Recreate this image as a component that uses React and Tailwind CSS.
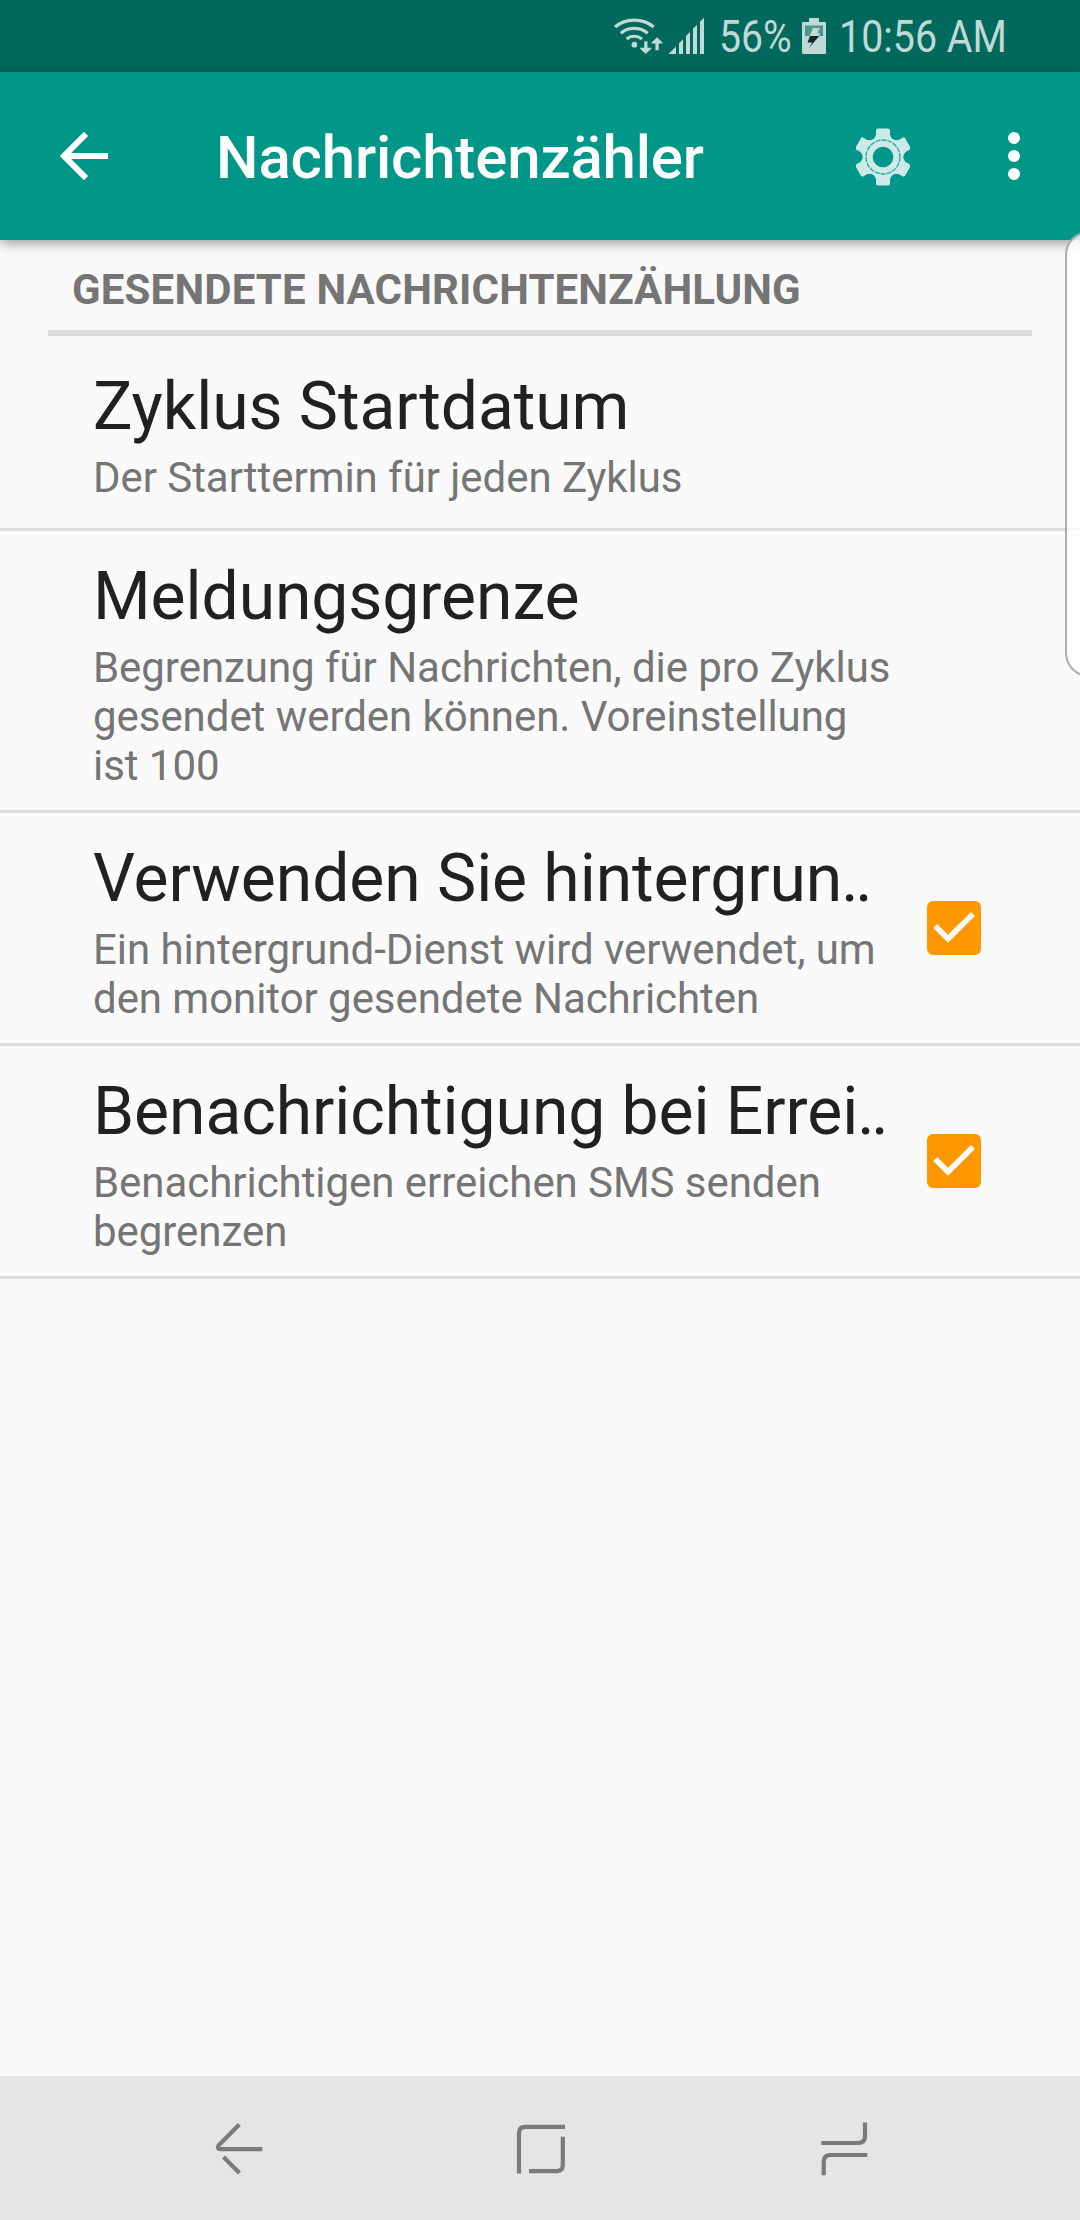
const INK = "#bfd9d6";

function StatusIcons() {
  return (
    <svg width="92" height="40" viewBox="613 15 92 40" fill="none">
      <g stroke={INK} strokeWidth="3.2">
        <path d="M615 26C625.500 16.800 643 16.800 653.700 26" />
        <path d="M620.800 32.200C628.200 25.800 640 25.800 647.800 32.200" />
        <path d="M626.700 38C631 34.300 637.300 34.300 642 38" />
      </g>
      <circle cx="634.400" cy="43.700" r="2.900" fill={INK} />
      <path fill={INK} d="M644.200 40.300h3.300v6.500h3.800v1l-5.600 5.200-5.600-5.200v-1h4.100zM655.400 49.300h3.300v-6.800h3.800v-1l-5.400-5.200-5.600 5.200v1h3.900z" />
      <path fill={INK} d="M668.500 53l7.500-7.500V53zM679 53V42.300l4-4V53zM686 53V35l4-4v22zM693 53V27.800l4-4V53zM700 53V20.800l4-4V53z" />
    </svg>
  );
}

function BatteryIcon() {
  return (
    <svg width="24" height="36" viewBox="802 18 24 36">
      <path fill={INK} d="M810 18h8q1 0 1 1v3h6q1 0 1 1v30q0 1-1 1h-22q-1 0-1-1V23q0-1 1-1h6v-3q0-1 1-1z" />
      <path fill="#4d968d" d="M805 25.500h18V36h-18z" />
      <path fill={INK} d="M813 28h7l-2.500 5h2.500l-1 3h-9.500z" />
      <path fill="#14282a" d="M810 36h9.300L808.700 48.200l3.500-5.700h-4.700z" />
    </svg>
  );
}

function GearIcon() {
  return (
    <svg width="54" height="60" viewBox="-27 -30 54 60">
      <g fill="#cceae7">
        {[0, 60, 120, 180, 240, 300].map((angle) => (
          <path key={angle} transform={`rotate(${angle})`} d="M-9.500-17L-7-22V-26.500q0-2 2-2H5q2 0 2 2V-22L9.500-17z" />
        ))}
        <circle r="20.500" />
      </g>
      <circle r="17" fill="none" stroke="#009688" strokeWidth="1.300" strokeDasharray="5 1" opacity=".8" />
      <circle r="10.300" fill="#009688" />
    </svg>
  );
}

function Checkbox() {
  return (
    <svg className="shrink-0 self-center" width="54" height="54" viewBox="0 0 54 54">
      <rect width="54" height="54" rx="6" fill="#ff9800" />
      <path d="M8.200 25L21 37.800 46 13" fill="none" stroke="#fafafa" strokeWidth="5.600" />
    </svg>
  );
}

function Row({ title, clipped, lines, checked }) {
  return (
    <div className="flex border-b-3 border-[#dcdcdc]">
      <div className="flex min-h-48 flex-1 items-start pr-[99px] pl-[93px]">
        <div className={lines.length === 1 ? "flex-1 pt-8 whitespace-nowrap" : "flex-1 pt-[27px] pb-5 whitespace-nowrap"}>
          <h2 className="text-[66px] leading-[77px] tracking-[-0.06px] text-[#212121]">
            {title}
            {clipped && <span className="-ml-px tracking-[-3.4px]">..</span>}
          </h2>
          <div className="mt-2 text-[42px] leading-[49px] tracking-[-0.05px] text-[#757575]">
            {lines.map((line) => (
              <p key={line}>{line}</p>
            ))}
          </div>
        </div>
        {checked && <Checkbox />}
      </div>
    </div>
  );
}

export default function App() {
  return (
    <div className="relative flex h-[2220px] w-[1080px] flex-col overflow-hidden bg-[#fafafa] font-['Roboto',sans-serif]">
      <div className="flex h-18 items-center bg-[#00695c] pl-[613px] text-[45px] leading-[53px] whitespace-nowrap text-[#bfd9d6]">
        <StatusIcons />
        <span className="ml-[14px] w-[74px] origin-left scale-x-[0.87] pt-px">56%</span>
        <span className="ml-[9px]"><BatteryIcon /></span>
        <span className="ml-[13px] origin-left scale-x-[0.875] pt-px">10:56 AM</span>
      </div>

      <header className="z-10 flex h-42 items-center bg-[#009688] text-white shadow-[0_3px_12px_rgba(0,0,0,0.4)]">
        <svg className="ml-[60px]" width="48" height="48" viewBox="0 0 48 48" fill="none" stroke="currentColor" strokeWidth="6">
          <path d="M48 24H6M26 2L4 24l22 22" />
        </svg>
        <h1 className="ml-[108px] pt-[3px] text-[60px] leading-[70px] font-medium tracking-[-0.17px]">Nachrichtenzähler</h1>
        <span className="mr-[98px] ml-auto pt-[2px]"><GearIcon /></span>
        <svg className="mr-[60px]" width="12" height="48" viewBox="0 0 12 48" fill="currentColor">
          <circle cx="6" cy="6" r="6" />
          <circle cx="6" cy="24" r="6" />
          <circle cx="6" cy="42" r="6" />
        </svg>
      </header>

      <div className="mx-12 flex h-24 items-center border-b-6 border-[#dcdcdc] px-6 pt-[8px]">
        <span className="text-[42px] leading-[49px] font-bold tracking-[0.16px] text-[#757575]">GESENDETE NACHRICHTENZÄHLUNG</span>
      </div>

      <main className="flex-1">
        <Row title="Zyklus Startdatum" lines={["Der Starttermin für jeden Zyklus"]} />
        <Row
          title="Meldungsgrenze"
          lines={["Begrenzung für Nachrichten, die pro Zyklus", "gesendet werden können. Voreinstellung", "ist 100"]}
        />
        <Row
          title="Verwenden Sie hintergrun"
          clipped
          lines={["Ein hintergrund-Dienst wird verwendet, um", "den monitor gesendete Nachrichten"]}
          checked
        />
        <Row
          title="Benachrichtigung bei Errei"
          clipped
          lines={["Benachrichtigen erreichen SMS senden", "begrenzen"]}
          checked
        />
      </main>

      <nav className="flex h-36 items-center bg-[#e5e5e5]">
        <svg className="ml-[214px]" width="52" height="56" viewBox="214 2120 52 56" fill="none" stroke="#7a7a7a" strokeWidth="4.200">
          <path d="M239.300 2124.500L218.700 2145.300Q216.500 2149.200 220.500 2149.200H262.300M223.500 2157L239.500 2173" />
        </svg>
        <svg className="ml-[249px]" width="52" height="56" viewBox="515 2120 52 56" fill="none" stroke="#7a7a7a" strokeWidth="4.200">
          <path d="M519 2173.500V2133Q519 2126.800 525.300 2126.800H565M562.800 2136.800V2165Q562.800 2171.200 556.500 2171.200H529" />
        </svg>
        <svg className="ml-[252px]" width="52" height="56" viewBox="819 2120 52 56" fill="none" stroke="#7a7a7a" strokeWidth="4.200">
          <path d="M821.300 2143H858Q865 2143 865 2136V2122.500M823.700 2175.300V2162Q823.700 2155 830.700 2155H867.300" />
        </svg>
      </nav>

      <div className="absolute top-[231px] -right-[42px] z-20 h-[446px] w-[57px] rounded-[24px] border-2 border-[#8c8c8c]/70 bg-white/80" />
    </div>
  );
}
